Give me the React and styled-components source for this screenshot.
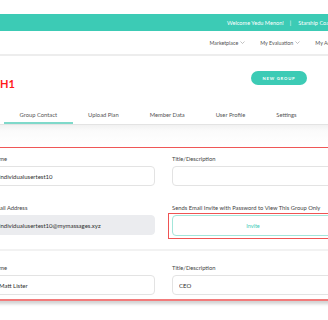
import React from 'react';
import styled, { createGlobalStyle } from 'styled-components';

const teal = '#3ccbb5';

const GlobalStyle = createGlobalStyle`
  body {
    margin: 0;
    background: #ffffff;
    font-family: Lato, "Open Sans", sans-serif;
    overflow: hidden;
  }
`;

const Chevron = () => (
  <svg width="5" height="3" viewBox="0 0 5 3" fill="none">
    <path d="M0.5 0.5 L2.5 2.5 L4.5 0.5" stroke="#999" strokeWidth="0.6" />
  </svg>
);

const App = () => {
  return (
    <>
      <GlobalStyle />
      <Page>
        <TopBar>
          <span>Welcome Yedu Menon!</span>
          <Divider>|</Divider>
          <span>Starship Coaching</span>
        </TopBar>

        <NavBar>
          <LogoTip />
          <NavMenu>
            <NavItem>Marketplace <Chevron /></NavItem>
            <NavItem>My Evaluation <Chevron /></NavItem>
            <NavItem>My Account <Chevron /></NavItem>
          </NavMenu>
        </NavBar>

        <Header>
          <Title>H1</Title>
          <NewButton>NEW GROUP</NewButton>
        </Header>

        <TabList>
          <Tab $active>Group Contact</Tab>
          <Tab>Upload Plan</Tab>
          <Tab>Member Data</Tab>
          <Tab>User Profile</Tab>
          <Tab>Settings</Tab>
        </TabList>

        <Content>
          <Card>
            <Section $top="7px" $bottom="13px" $divider>
              <Field>
                <Label>Name</Label>
                <Input readOnly value="individualusertest10" />
              </Field>
              <Field>
                <Label>Title/Description</Label>
                <Input readOnly value="" />
              </Field>
              <Field>
                <Label>Email Address</Label>
                <Input readOnly $filled value="individualusertest10@mymassages.xyz" />
              </Field>
              <Field>
                <Label>Sends Email Invite with Password to View This Group Only</Label>
                <InviteFrame>
                  <InviteButton>Invite</InviteButton>
                </InviteFrame>
              </Field>
            </Section>
            <Section $top="13px" $bottom="4px">
              <Field>
                <Label>Name</Label>
                <Input readOnly value="Matt Lister" />
              </Field>
              <Field>
                <Label>Title/Description</Label>
                <Input readOnly value="CEO" />
              </Field>
            </Section>
          </Card>
        </Content>
      </Page>
    </>
  );
};

const Page = styled.div`
  width: 328px;
  height: 320px;
  overflow: hidden;
  padding-top: 14px;
  box-sizing: border-box;
`;

const TopBar = styled.div`
  height: 17px;
  background: ${teal};
  display: flex;
  align-items: center;
  padding-left: 227px;
  color: #ffffff;
  font-size: 5.6px;
  white-space: nowrap;
`;

const Divider = styled.span`
  margin: 0 7px 0 6px;
`;

const NavBar = styled.div`
  height: 23px;
  display: flex;
  align-items: center;
  border-bottom: 2px solid #ededed;
  white-space: nowrap;
`;

const LogoTip = styled.div`
  width: 1.5px;
  height: 3px;
  background: ${teal};
  opacity: 0.6;
`;

const NavMenu = styled.div`
  display: flex;
  gap: 15px;
  margin-left: 209.5px;
`;

const NavItem = styled.span`
  display: inline-flex;
  align-items: center;
  gap: 2px;
  font-size: 5.3px;
  color: #555;
`;

const Header = styled.div`
  display: flex;
  justify-content: space-between;
  align-items: flex-start;
  padding: 15px 21px 0 0;
`;

const Title = styled.h1`
  margin: 7px 0 0;
  font-size: 11px;
  line-height: 11px;
  font-weight: 700;
  color: #ff1a1a;
`;

const NewButton = styled.button`
  width: 56px;
  height: 14px;
  border: none;
  border-radius: 7px;
  background: ${teal};
  color: #ffffff;
  font-family: inherit;
  font-size: 4.2px;
  font-weight: 700;
  letter-spacing: 0.8px;
  padding: 0;
`;

const TabList = styled.div`
  display: flex;
  margin-top: 17px;
  padding-left: 4px;
  border-bottom: 1px solid #e3e3e3;
  white-space: nowrap;
`;

const Tab = styled.div`
  padding: 5px 15.5px 3px;
  font-size: 5.8px;
  line-height: 8px;
  color: #555;
  border-bottom: 2px solid ${(p) => (p.$active ? '#7fd9ca' : 'transparent')};
`;

const Content = styled.div`
  background: linear-gradient(#f1f1f1, #fbfbfb 6px, #ffffff 20px);
  padding-top: 22px;
  padding-bottom: 20px;
`;

const Card = styled.div`
  width: 380px;
  margin-left: -20px;
  background: #ffffff;
  border-top: 1px solid #ef5757;
  border-bottom: 2px solid #f27b7b;
  box-shadow: 0 3px 3px rgba(0, 0, 0, 0.18);
`;

const Section = styled.div`
  display: grid;
  grid-template-columns: 163px 163px;
  column-gap: 17px;
  row-gap: 18px;
  padding: ${(p) => p.$top} 0 ${(p) => p.$bottom} 12px;
  border-bottom: ${(p) => (p.$divider ? '2px solid #f2f2f2' : 'none')};
`;

const Field = styled.div`
  display: flex;
  flex-direction: column;
  gap: 3px;
`;

const Label = styled.label`
  font-size: 5.8px;
  line-height: 8px;
  color: #444;
  white-space: nowrap;
`;

const Input = styled.input`
  box-sizing: border-box;
  height: 20px;
  width: 100%;
  margin: 0;
  padding: 0 6px;
  border: 1px solid ${(p) => (p.$filled ? '#ebecef' : '#e3e3e3')};
  border-radius: 4px;
  background: ${(p) => (p.$filled ? '#ebecef' : '#ffffff')};
  font-family: inherit;
  font-size: 6px;
  color: #2e2e2e;
  outline: none;
`;

const InviteFrame = styled.div`
  margin: -2px 0 -3px -4px;
  padding: 1px 0 2px 3px;
  border: 1px solid #ef5353;
`;

const InviteButton = styled.button`
  box-sizing: border-box;
  display: block;
  width: 100%;
  height: 21px;
  border: 1px solid #a3e6da;
  border-radius: 4px;
  background: #ffffff;
  color: ${teal};
  font-family: inherit;
  font-size: 5.5px;
  padding: 0;
`;

export default App;
